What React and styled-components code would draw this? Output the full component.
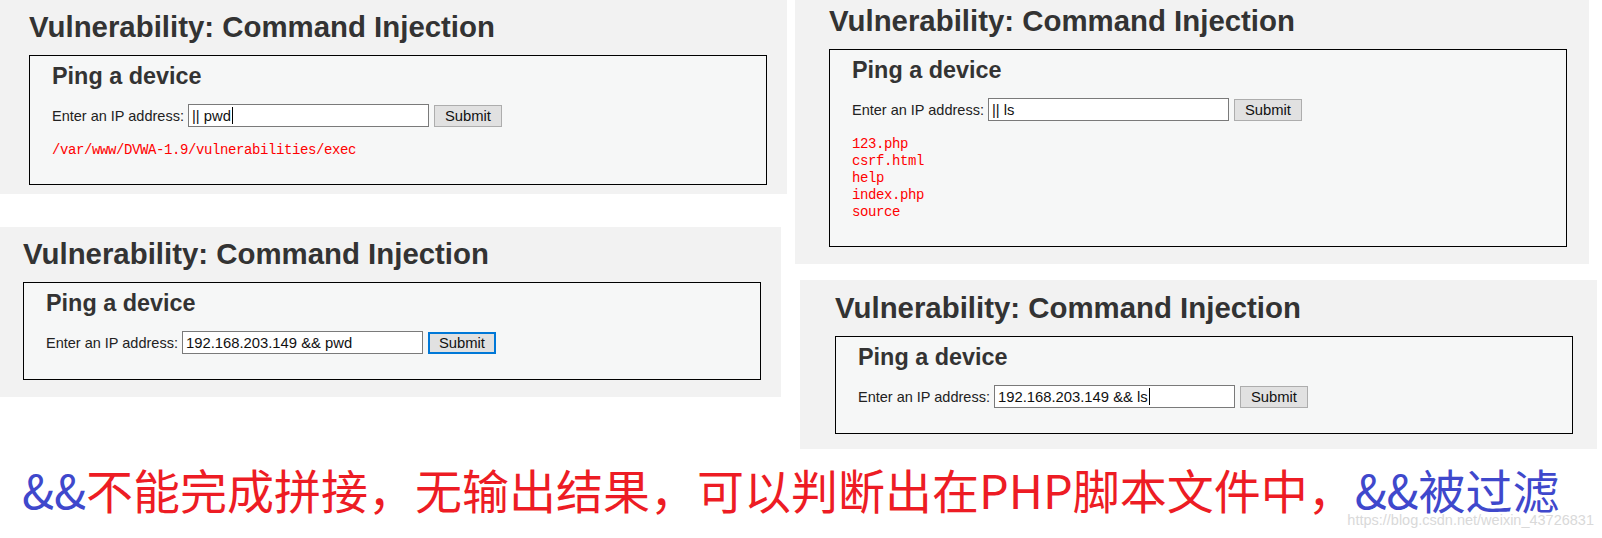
import React from 'react';
import styled, { createGlobalStyle } from 'styled-components';

const Global = createGlobalStyle`
  html, body { margin: 0; padding: 0; background: #fff; }
  body { font-family: "Liberation Sans", Arial, sans-serif; }
`;

const Page = styled.div`
  position: relative;
  width: 1602px;
  height: 538px;
  overflow: hidden;
  background: #fff;
`;

const Columns = styled.div`
  display: flex;
  gap: 8px;
  align-items: flex-start;
`;

const Column = styled.div`
  display: flex;
  flex-direction: column;
  align-items: flex-start;
`;

const Panel = styled.section`
  box-sizing: border-box;
  width: ${(p) => p.$w}px;
  margin-top: ${(p) => p.$mt || 0}px;
  margin-left: ${(p) => p.$ml || 0}px;
  padding: ${(p) => p.$pt}px 0 ${(p) => p.$pb}px ${(p) => p.$pl}px;
  background: #f2f2f2;
`;

const Title = styled.h1`
  margin: 0 0 13px;
  font-size: 29.4px;
  line-height: 30px;
  font-weight: bold;
  color: #333;
  white-space: nowrap;
`;

const Box = styled.div`
  box-sizing: border-box;
  width: 738px;
  border: 1px solid #000;
  background: #f6f7f7;
  padding: 7px 0 25px 22px;
`;

const Subtitle = styled.h2`
  margin: 0 0 15px;
  font-size: 23.4px;
  line-height: 26px;
  font-weight: bold;
  color: #333;
`;

const Row = styled.div`
  display: flex;
  align-items: center;
  height: 23px;
`;

const Label = styled.span`
  font-size: 14.5px;
  color: #222;
  margin-right: 4px;
  white-space: nowrap;
`;

const Field = styled.div`
  box-sizing: border-box;
  width: 241px;
  height: 23px;
  border: 1px solid #7a7a7a;
  background: #fff;
  display: flex;
  align-items: center;
  padding-left: 3px;
  font-size: 14.8px;
  color: #111;
  white-space: pre;
`;

const Caret = styled.span`
  display: inline-block;
  width: 1px;
  height: 17px;
  background: #000;
  margin-left: 1px;
`;

const Button = styled.button`
  box-sizing: border-box;
  width: 68px;
  height: 22px;
  margin-left: 5px;
  padding: 0;
  font-family: inherit;
  font-size: 14.8px;
  color: #111;
  background: #e1e1e1;
  border: ${(p) => (p.$focused ? '2px solid #0078d7' : '1px solid #adadad')};
`;

const Output = styled.pre`
  margin: 15px 0 0;
  font-family: "Liberation Mono", monospace;
  font-size: 14px;
  letter-spacing: -0.4px;
  line-height: 17px;
  color: #f00;
`;

const Caption = styled.p`
  margin: 16px 0 0 22px;
  font-family: "Noto Sans CJK SC", sans-serif;
  font-size: 47px;
  line-height: 48px;
  color: #ed1c24;
  white-space: nowrap;
`;

const Amp = styled.span`
  color: #3f48cc;
`;

const Watermark = styled.span`
  position: absolute;
  right: 8px;
  bottom: 10px;
  font-family: "Liberation Sans", Arial, sans-serif;
  font-size: 14.5px;
  line-height: 16px;
  color: #d9d9d9;
`;

function DvwaPanel({ w, mt, ml, pt, pb, pl, value, caret, focused, output }) {
  return (
    <Panel $w={w} $mt={mt} $ml={ml} $pt={pt} $pb={pb} $pl={pl}>
      <Title>Vulnerability: Command Injection</Title>
      <Box>
        <Subtitle>Ping a device</Subtitle>
        <Row>
          <Label>Enter an IP address:</Label>
          <Field>
            {value}
            {caret && <Caret />}
          </Field>
          <Button $focused={focused}>Submit</Button>
        </Row>
        {output && <Output>{output}</Output>}
      </Box>
    </Panel>
  );
}

export default function App() {
  return (
    <Page>
      <Global />
      <Columns>
        <Column>
          <DvwaPanel w={787} pt={12} pb={9} pl={29} value="|| pwd" caret output="/var/www/DVWA-1.9/vulnerabilities/exec" />
          <DvwaPanel w={781} mt={33} pt={12} pb={17} pl={23} value="192.168.203.149 && pwd" focused />
        </Column>
        <Column>
          <DvwaPanel
            w={794}
            pt={6}
            pb={17}
            pl={34}
            value="|| ls"
            output={'123.php\ncsrf.html\nhelp\nindex.php\nsource'}
          />
          <DvwaPanel w={797} mt={16} ml={5} pt={13} pb={15} pl={35} value="192.168.203.149 && ls" caret />
        </Column>
      </Columns>
      <Caption>
        <Amp>&amp;&amp;</Amp>不能完成拼接，无输出结果，可以判断出在PHP脚本文件中，<Amp>&amp;&amp;被过滤</Amp>
      </Caption>
      <Watermark>https://blog.csdn.net/weixin_43726831</Watermark>
    </Page>
  );
}
